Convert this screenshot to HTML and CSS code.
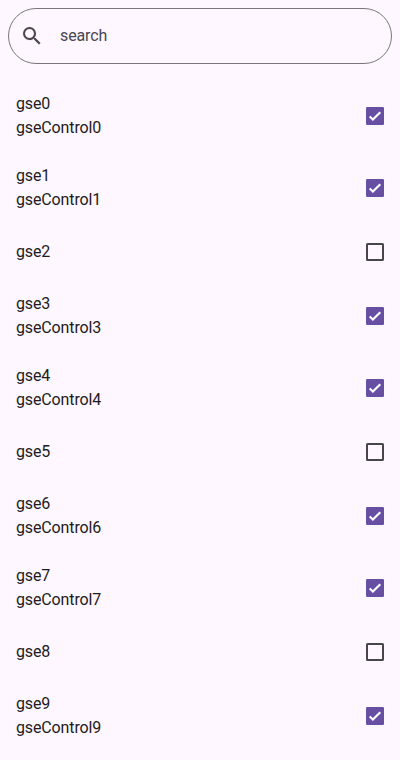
FILE: index.html
```html
<!DOCTYPE html>
<html lang="en">
<head>
<meta charset="utf-8">
<title>Search list</title>
<link rel="stylesheet" href="styles.css">
</head>
<body>
<svg width="0" height="0" class="defs">
<symbol id="on" viewBox="0 0 18 18"><rect width="18" height="18" rx="1.2" fill="#6750a4"/><path d="M3.7 9.4l3.2 3.2L14.3 5.2" fill="none" stroke="#fff" stroke-width="2.1"/></symbol>
<symbol id="off" viewBox="0 0 18 18"><path fill="#49454f" fill-rule="evenodd" d="M1.5 0h15A1.5 1.5 0 0 1 18 1.5v15a1.5 1.5 0 0 1-1.5 1.5h-15A1.5 1.5 0 0 1 0 16.5v-15A1.5 1.5 0 0 1 1.5 0zM2 2v14h14V2z"/></symbol>
</svg>
<div class="search">
<svg class="glass" viewBox="0 0 24 24"><path fill="currentColor" stroke="currentColor" stroke-width=".1" d="M15.5 14h-.79l-.28-.27A6.471 6.471 0 0 0 16 9.5 6.5 6.5 0 1 0 9.5 16c1.61 0 3.09-.59 4.23-1.57l.27.28v.79l5 4.99L20.49 19l-4.99-5zm-6 0C7.01 14 5 11.99 5 9.5S7.01 5 9.5 5 14 7.01 14 9.5 11.99 14 9.5 14z"/></svg>
<span>search</span>
</div>
<ul class="list">
<li class="row"><div>gse0<br>gseControl0</div><svg class="box"><use href="#on"/></svg></li>
<li class="row"><div>gse1<br>gseControl1</div><svg class="box"><use href="#on"/></svg></li>
<li class="row single"><div>gse2</div><svg class="box"><use href="#off"/></svg></li>
<li class="row"><div>gse3<br>gseControl3</div><svg class="box"><use href="#on"/></svg></li>
<li class="row"><div>gse4<br>gseControl4</div><svg class="box"><use href="#on"/></svg></li>
<li class="row single"><div>gse5</div><svg class="box"><use href="#off"/></svg></li>
<li class="row"><div>gse6<br>gseControl6</div><svg class="box"><use href="#on"/></svg></li>
<li class="row"><div>gse7<br>gseControl7</div><svg class="box"><use href="#on"/></svg></li>
<li class="row single"><div>gse8</div><svg class="box"><use href="#off"/></svg></li>
<li class="row"><div>gse9<br>gseControl9</div><svg class="box"><use href="#on"/></svg></li>
</ul>
</body>
</html>
```
FILE: styles.css
```css
* { box-sizing: border-box; }
body {
  margin: 0;
  padding: 8px;
  height: 760px;
  overflow: hidden;
  background: #fef7ff;
  color: #1d1b20;
  font: 16px/24px Roboto, sans-serif;
  letter-spacing: -0.13px;
}
.defs { position: absolute; }
.search {
  display: flex;
  align-items: center;
  gap: 16px;
  height: 56px;
  padding: 0 11px;
  border: 1px solid #79747e;
  border-radius: 28px;
  color: #49454f;
}
.glass { width: 24px; height: 24px; }
.list { list-style: none; margin: 16px 0 0; padding: 0 8px; }
.row {
  display: flex;
  align-items: center;
  justify-content: space-between;
  height: 72px;
}
.single { height: 56px; }
.box { width: 18px; height: 18px; }
```
